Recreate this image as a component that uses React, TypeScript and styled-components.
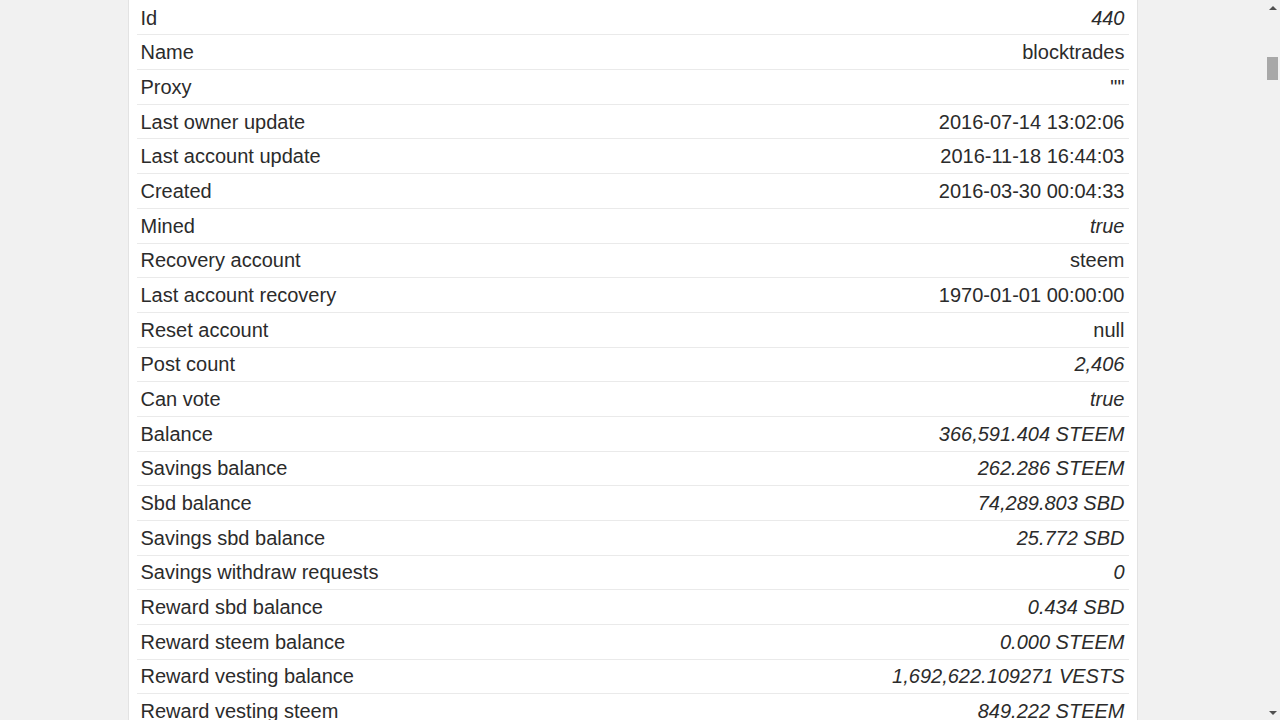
import styled, { createGlobalStyle } from 'styled-components';

const GlobalStyle = createGlobalStyle`
    html, body {
        margin: 0;
        padding: 0;
        height: 100%;
        overflow: hidden;
        background: #f1f1f1;
    }
    #root {
        height: 100%;
    }
`;

const Screen = styled.div`
    display: flex;
    height: 720px;
    width: 1280px;
    overflow: hidden;
`;

const Main = styled.div`
    flex: 1;
    display: flex;
    justify-content: center;
    overflow: hidden;
`;

const Panel = styled.div`
    width: 1010px;
    box-sizing: border-box;
    background: #fff;
    border-left: 1px solid #e3e3e3;
    border-right: 1px solid #e3e3e3;
    padding: 0.8px 8px 0;
    font-family: 'Liberation Sans', Arial, sans-serif;
    font-size: 20px;
    color: #2b2b2b;
`;

const Row = styled.div`
    display: flex;
    justify-content: space-between;
    align-items: center;
    box-sizing: border-box;
    height: 34.68px;
    padding: 1px 4px 0;
    border-bottom: 1px solid #eaeaea;
`;

const Label = styled.span`
    white-space: nowrap;
`;

const Value = styled.span<{ $italic?: boolean }>`
    white-space: nowrap;
    font-style: ${(p) => (p.$italic ? 'italic' : 'normal')};
`;

const ScrollBar = styled.div`
    width: 15px;
    display: flex;
    flex-direction: column;
    background: #f1f1f1;
`;

const Arrow = styled.div<{ $down?: boolean }>`
    height: 15px;
    display: flex;
    align-items: center;
    justify-content: center;
    &::after {
        content: '';
        border-left: 4px solid transparent;
        border-right: 4px solid transparent;
        ${(p) => (p.$down ? 'border-top: 4px solid #505050;' : 'border-bottom: 4px solid #505050;')}
    }
`;

const Track = styled.div`
    flex: 1;
    padding-top: 42px;
    display: flex;
    justify-content: center;
`;

const Thumb = styled.div`
    width: 11px;
    height: 23px;
    background: #a8a8a8;
`;

// 계정 정보 행
const rows: { label: string; value: string; italic?: boolean }[] = [
    { label: 'Id', value: '440', italic: true },
    { label: 'Name', value: 'blocktrades' },
    { label: 'Proxy', value: '""' },
    { label: 'Last owner update', value: '2016-07-14 13:02:06' },
    { label: 'Last account update', value: '2016-11-18 16:44:03' },
    { label: 'Created', value: '2016-03-30 00:04:33' },
    { label: 'Mined', value: 'true', italic: true },
    { label: 'Recovery account', value: 'steem' },
    { label: 'Last account recovery', value: '1970-01-01 00:00:00' },
    { label: 'Reset account', value: 'null' },
    { label: 'Post count', value: '2,406', italic: true },
    { label: 'Can vote', value: 'true', italic: true },
    { label: 'Balance', value: '366,591.404 STEEM', italic: true },
    { label: 'Savings balance', value: '262.286 STEEM', italic: true },
    { label: 'Sbd balance', value: '74,289.803 SBD', italic: true },
    { label: 'Savings sbd balance', value: '25.772 SBD', italic: true },
    { label: 'Savings withdraw requests', value: '0', italic: true },
    { label: 'Reward sbd balance', value: '0.434 SBD', italic: true },
    { label: 'Reward steem balance', value: '0.000 STEEM', italic: true },
    { label: 'Reward vesting balance', value: '1,692,622.109271 VESTS', italic: true },
    { label: 'Reward vesting steem', value: '849.222 STEEM', italic: true },
];

const App: React.FC = () => {
    return (
        <>
            <GlobalStyle />
            <Screen>
                <Main>
                    <Panel>
                        {rows.map((row, idx) => (
                            <Row key={idx}>
                                <Label>{row.label}</Label>
                                <Value $italic={row.italic}>{row.value}</Value>
                            </Row>
                        ))}
                    </Panel>
                </Main>
                <ScrollBar>
                    <Arrow />
                    <Track>
                        <Thumb />
                    </Track>
                    <Arrow $down />
                </ScrollBar>
            </Screen>
        </>
    );
};

export default App;
